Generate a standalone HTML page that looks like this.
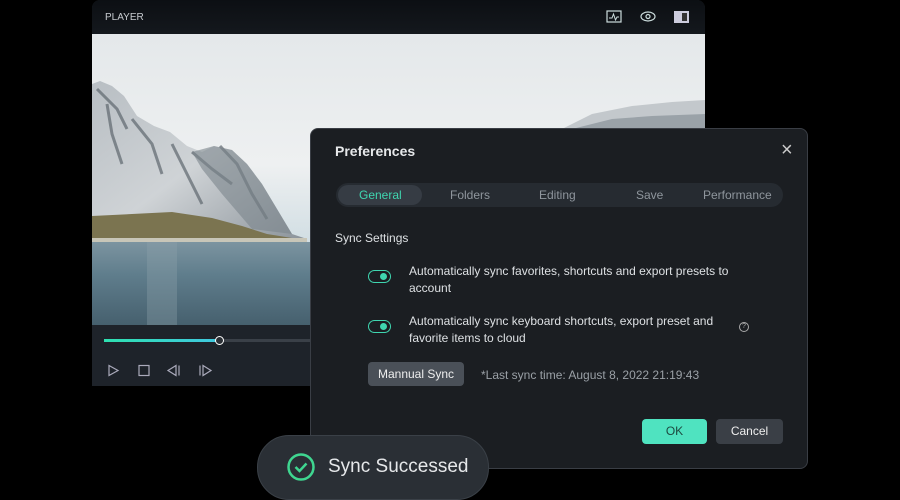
<!DOCTYPE html><html><head><style>
body{margin:0;width:900px;height:500px;background:#000;position:relative;overflow:hidden;font-family:"Liberation Sans",sans-serif}
.a{position:absolute}
</style></head><body>
<div class="a" style="left:92px;top:0;width:613px;height:386px;background:#1e232a;border-radius:8px 8px 0 0;overflow:hidden">
 <div class="a" style="left:0;top:0;width:613px;height:34px;background:linear-gradient(#0c0f13,#14181d)"></div>
 <div class="a" style="left:13px;top:12px;color:#c8ccd0;font-size:10px">PLAYER</div>
 <svg class="a" style="left:514px;top:9px" width="90" height="16" viewBox="0 0 90 16"><rect x="1" y="2" width="14" height="11" fill="none" stroke="#cdd" stroke-width="1.2"/><path d="M3 9 L6 9 L7.5 5 L9.5 11 L11 8 L13 8" fill="none" stroke="#cdd" stroke-width="1"/><ellipse cx="42" cy="7.5" rx="7" ry="4.5" fill="none" stroke="#cdd" stroke-width="1.2"/><circle cx="42" cy="7.5" r="2" fill="none" stroke="#cdd" stroke-width="1.2"/><rect x="68" y="2" width="15" height="12" fill="#ccd"/><rect x="76" y="4" width="5" height="8" fill="#333"/></svg>
 <svg class="a" style="left:0;top:34px" width="613" height="291">
  <defs>
   <linearGradient id="sky" x1="0" y1="0" x2="0" y2="1"><stop offset="0" stop-color="#e4e8ea"/><stop offset="0.45" stop-color="#eef0f1"/><stop offset="0.7" stop-color="#d3dfe4"/></linearGradient>
   <linearGradient id="wat" x1="0" y1="0" x2="0" y2="1"><stop offset="0" stop-color="#7c94a0"/><stop offset="0.4" stop-color="#5f7d8c"/><stop offset="1" stop-color="#46606e"/></linearGradient>
   <linearGradient id="mt" x1="0" y1="0" x2="1" y2="1"><stop offset="0" stop-color="#b8bec3"/><stop offset="0.5" stop-color="#cfd3d6"/><stop offset="1" stop-color="#8a9299"/></linearGradient>
  </defs>
  <rect width="613" height="291" fill="url(#sky)"/>
  <polygon points="470,95 500,80 540,72 580,68 613,66 613,210 470,210" fill="#c3c8cc"/>
  <polygon points="480,95 520,85 560,82 613,80 613,95" fill="#9aa2a8"/>
  <polygon points="0,50 8,47 20,52 32,62 45,82 62,92 78,98 95,112 110,118 122,112 140,116 155,130 170,150 185,175 200,200 215,205 0,208" fill="url(#mt)"/>
  <path d="M5 55 L25 75 L35 95 M40 85 L60 110 L70 140 M15 70 L20 100 L30 130 M100 118 L120 135 L140 150 M128 112 L145 130 L160 160 L175 185 M80 110 L95 140 L110 170" stroke="#5e666d" stroke-width="3" fill="none" opacity="0.7"/>
  <polygon points="100,118 122,112 140,116 155,130 170,150 185,175 200,200 160,195 130,160 110,135" fill="#7c858c" opacity="0.6"/>
  <polygon points="0,182 40,180 80,178 120,184 150,192 175,200 200,204 0,207" fill="#7b7450"/>
  <rect x="0" y="204" width="215" height="4" fill="#c8c6b8"/>
  <rect x="0" y="208" width="613" height="83" fill="url(#wat)"/>
  <rect x="55" y="208" width="30" height="83" fill="#8ea2ad" opacity="0.35"/>
 </svg>
 <div class="a" style="left:12px;top:339px;width:500px;height:3px;background:#3a4048"></div>
 <div class="a" style="left:12px;top:339px;width:115px;height:3px;background:linear-gradient(90deg,#2ee0b0,#40c8e0)"></div>
 <div class="a" style="left:123px;top:336px;width:7px;height:7px;border-radius:50%;background:#2b3036;border:1.5px solid #fff"></div>
 <svg class="a" style="left:15px;top:364px" width="110" height="14" viewBox="0 0 110 14"><path d="M2 1.5 L11 6.5 L2 11.5Z" fill="none" stroke="#aab" stroke-width="1.2"/><rect x="32" y="1.5" width="10" height="10" fill="none" stroke="#aab" stroke-width="1.2"/><path d="M69 1.5 L61 6.5 L69 11.5Z M72 1.5 V11.5" fill="none" stroke="#aab" stroke-width="1.2"/><path d="M93 1.5 V11.5 M96 1.5 L104 6.5 L96 11.5Z" fill="none" stroke="#aab" stroke-width="1.2"/></svg>
</div>
<div class="a" style="left:310px;top:128px;width:496px;height:339px;background:#1b1e22;border:1px solid #3a3e45;border-radius:8px;color:#dde0e3">
 <div class="a" style="left:24px;top:14px;font-size:14px;font-weight:bold;color:#e6e8ea">Preferences</div>
 <div class="a" style="left:470px;top:10px;font-size:20px;color:#ccc">×</div>
 <div class="a" style="left:25px;top:54px;width:447px;height:24px;background:#262b31;border-radius:12px;font-size:12px;color:#8f969d">
  <div class="a" style="left:2px;top:2px;width:84px;height:20px;background:#363c44;border-radius:10px"></div>
  <div class="a" style="left:23px;top:5px;color:#3fd6b0">General</div>
  <div class="a" style="left:114px;top:5px">Folders</div>
  <div class="a" style="left:203px;top:5px">Editing</div>
  <div class="a" style="left:300px;top:5px">Save</div>
  <div class="a" style="left:367px;top:5px">Performance</div>
 </div>
 <div class="a" style="left:24px;top:102px;font-size:12px">Sync Settings</div>
 <div class="a" style="left:57px;top:141px;width:21px;height:11px;border:1.5px solid #3fd6b0;border-radius:8px"><div class="a" style="left:11px;top:2px;width:7px;height:7px;border-radius:50%;background:#3fd6b0"></div></div>
 <div class="a" style="left:98px;top:134px;font-size:12px;line-height:17px;width:350px">Automatically sync favorites, shortcuts and export presets to account</div>
 <div class="a" style="left:57px;top:191px;width:21px;height:11px;border:1.5px solid #3fd6b0;border-radius:8px"><div class="a" style="left:11px;top:2px;width:7px;height:7px;border-radius:50%;background:#3fd6b0"></div></div>
 <div class="a" style="left:98px;top:184px;font-size:12px;line-height:17px;width:330px">Automatically sync keyboard shortcuts, export preset and favorite items to cloud</div>
 <div class="a" style="left:428px;top:193px;width:8px;height:8px;border:1px solid #aaa;border-radius:50%;font-size:7px;text-align:center;line-height:8px;color:#aaa">?</div>
 <div class="a" style="left:57px;top:233px;width:96px;height:24px;background:#4a5058;border-radius:4px;font-size:12px;line-height:24px;text-align:center;color:#eee">Mannual Sync</div>
 <div class="a" style="left:170px;top:239px;font-size:12px;color:#9aa0a6">*Last sync time: August 8, 2022 21:19:43</div>
 <div class="a" style="left:331px;top:290px;width:65px;height:25px;background:#4fe3c0;border-radius:4px;font-size:12px;line-height:25px;text-align:center;color:#1d4a40">OK</div>
 <div class="a" style="left:405px;top:290px;width:67px;height:25px;background:#3a3f46;border-radius:4px;font-size:12px;line-height:25px;text-align:center;color:#eee">Cancel</div>
</div>
<div class="a" style="left:257px;top:435px;width:230px;height:63px;background:#2a2f35;border:1px solid #3a4047;border-radius:32px"></div>
<svg class="a" style="left:286px;top:452px" width="30" height="30"><circle cx="15" cy="15" r="12.5" fill="none" stroke="#3fd690" stroke-width="2.5"/><path d="M9.5 15 L13.5 19 L20.5 11.5" fill="none" stroke="#3fd690" stroke-width="2.5"/></svg>
<div class="a" style="left:328px;top:456px;font-size:19px;color:#e6e8ea">Sync Successed</div>
</body></html>
